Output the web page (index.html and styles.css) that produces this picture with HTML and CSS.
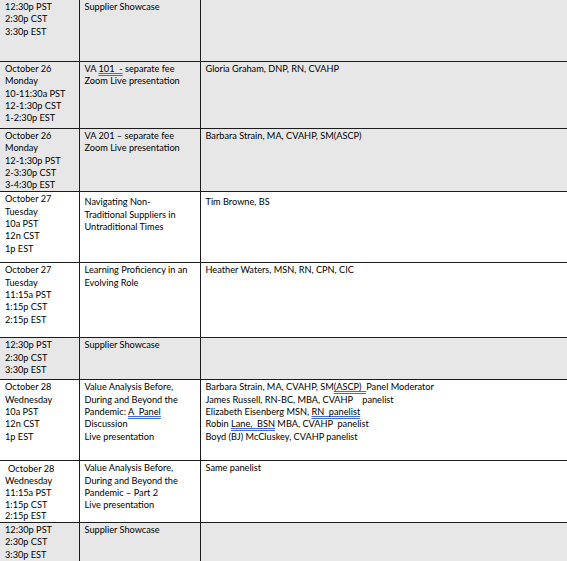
FILE: index.html
```html
<!DOCTYPE html>
<html>
<head>
<meta charset="utf-8">
<link rel="stylesheet" href="styles.css">
</head>
<body>
<table class="sched">
  <colgroup><col class="c1"><col class="c2"><col class="c3"></colgroup>
  <tr class="gray r1">
    <td>12:30p PST<br>2:30p CST<br>3:30p EST</td>
    <td>Supplier Showcase</td>
    <td></td>
  </tr>
  <tr class="gray r2">
    <td>October 26<br>Monday<br>10-11:30a PST<br>12-1:30p CST<br>1-2:30p EST</td>
    <td>VA <span class="gram">101&nbsp; -</span> separate fee<br>Zoom Live presentation</td>
    <td>Gloria Graham, DNP, RN, CVAHP</td>
  </tr>
  <tr class="gray r3">
    <td>October 26<br>Monday<br>12-1:30p PST<br>2-3:30p CST<br>3-4:30p EST</td>
    <td>VA 201 – separate fee<br>Zoom Live presentation</td>
    <td>Barbara Strain, MA, CVAHP, SM(ASCP)</td>
  </tr>
  <tr class="r4">
    <td>October 27<br>Tuesday<br>10a PST<br>12n CST<br>1p EST</td>
    <td class="pt">Navigating Non-<br>Traditional Suppliers in<br>Untraditional Times</td>
    <td class="pt">Tim Browne, BS</td>
  </tr>
  <tr class="r5">
    <td>October 27<br>Tuesday<br>11:15a PST<br>1:15p CST<br>2:15p EST</td>
    <td>Learning Proficiency in an<br>Evolving Role</td>
    <td>Heather Waters, MSN, RN, CPN, CIC</td>
  </tr>
  <tr class="gray r6">
    <td>12:30p PST<br>2:30p CST<br>3:30p EST</td>
    <td>Supplier Showcase</td>
    <td></td>
  </tr>
  <tr class="r7">
    <td>October 28<br>Wednesday<br>10a PST<br>12n CST<br>1p EST</td>
    <td>Value Analysis Before,<br>During and Beyond the<br>Pandemic: <span class="gram">A&nbsp; Panel</span><br>Discussion<br>Live presentation</td>
    <td>Barbara Strain, MA, CVAHP, SM<span class="gram">(ASCP)&nbsp;&nbsp;</span>Panel Moderator<br>James Russell, RN-BC, MBA, CVAHP&nbsp;&nbsp;&nbsp; panelist<br>Elizabeth Eisenberg MSN, <span class="gram">RN&nbsp; panelist</span><br>Robin <span class="gram">Lane,&nbsp; BSN</span> MBA, CVAHP&nbsp; panelist<br>Boyd (BJ) McCluskey, CVAHP panelist</td>
  </tr>
  <tr class="r8">
    <td class="tight"><span class="ind">October 28</span><br>Wednesday<br>11:15a PST<br>1:15p CST<br>2:15p EST</td>
    <td>Value Analysis Before,<br>During and Beyond the<br>Pandemic – Part 2<br>Live presentation</td>
    <td>Same panelist</td>
  </tr>
  <tr class="gray r9">
    <td>12:30p PST<br>2:30p CST<br>3:30p EST</td>
    <td>Supplier Showcase</td>
    <td></td>
  </tr>
</table>
</body>
</html>
```
FILE: styles.css
```css
html, body {
  margin: 0;
  padding: 0;
  background: #ffffff;
}
.sched {
  border-collapse: collapse;
  table-layout: fixed;
  width: 569px;
  margin-top: -1px;
  font-family: Lato, "Noto Sans", sans-serif;
  font-size: 9.2px;
  line-height: 12.3px;
  color: #000000;
}
.c1 { width: 79px; }
.c2 { width: 121px; }
.c3 { width: 369px; }
.sched td {
  vertical-align: top;
  padding: 1px 0 0 5px;
  border: 1px solid #1c1c1c;
  white-space: nowrap;
  overflow: hidden;
}
.sched td:first-child { border-left: none; }
.sched tr.gray td { background: #e7e7e7; }
.sched td.pt { padding-top: 4px; }
.sched td.tight {
  line-height: 11.7px;
  padding-top: 2px;
}
.r1 { height: 62px; }
.r2 { height: 67px; }
.r3 { height: 63px; }
.r4 { height: 71px; }
.r5 { height: 75px; }
.r6 { height: 42px; }
.r7 { height: 81px; }
.r8 { height: 61px; }
.r9 { height: 40px; }
.r9 td { border-bottom-color: #bdbdbd; }
.gram {
  text-decoration: underline double #3a6fd8;
  text-decoration-thickness: 1px;
  text-underline-offset: 1px;
}
.ind { padding-left: 3px; }
```
